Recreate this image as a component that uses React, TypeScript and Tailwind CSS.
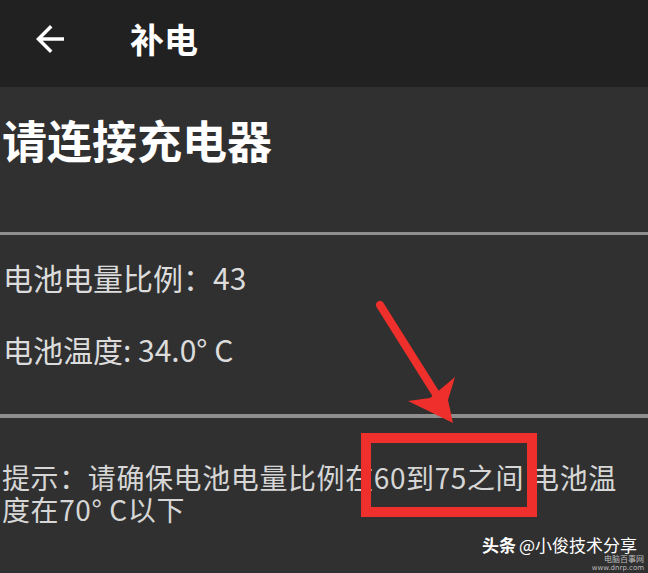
import React from "react";

const font = { fontFamily: '"Noto Sans CJK SC", "Noto Sans", sans-serif' };

export default function App() {
  return (
    <div className="relative w-[648px] h-[573px] overflow-hidden bg-[#303030]" style={font}>
      {/* header */}
      <div className="h-[87px] bg-[#212121] flex items-center">
        <svg width="42" height="42" viewBox="0 0 24 24" className="ml-[29px] mt-[-10px]" fill="#ffffff">
          <path d="M20 11H7.83l5.59-5.59L12 4l-8 8 8 8 1.41-1.41L7.83 13H20v-2z" />
        </svg>
        <div className="ml-[59px] mt-[-10px] text-[34px] font-bold text-white leading-none">补电</div>
      </div>

      {/* title */}
      <div className="pt-[24px] pl-[2px] text-[45px] font-bold text-white leading-[58px]">请连接充电器</div>

      <div className="mt-[63px] h-[3px] bg-[#8e8e8e]" />

      <div className="mt-[6px] pl-[3px] text-[30px] text-[#dcdcdc] leading-[72px]">电池电量比例：43</div>
      <div className="pl-[3px] text-[30px] text-[#dcdcdc] leading-[72px]">电池温度: 34.0° C</div>

      <div className="mt-[29px] h-[4px] bg-[#8e8e8e]" />

      <div className="mt-[43px] pl-[2px] pr-[20px] text-[28px] tracking-[0.6px] text-[#d6d6d6] leading-[32px]">
        提示：请确保电池电量比例在60到75之间 电池温度在70° C以下
      </div>

      {/* annotations */}
      <div className="absolute left-[361px] top-[433px] w-[176px] h-[84px] border-[10px] border-[#ee2f2b]" />
      <svg className="absolute left-0 top-0" width="648" height="573" viewBox="0 0 648 573">
        <line x1="380" y1="305" x2="446" y2="410" stroke="#ee2f2b" strokeWidth="8" strokeLinecap="round" />
        <polygon points="453,423 408,401 430,398 455,377 448,400" fill="#ee2f2b" />
      </svg>

      {/* watermark */}
      <div className="absolute left-[482px] top-[536px] flex items-center text-white text-[17px] leading-none">
        <span className="font-bold">头条</span>
        <span className="ml-[3px]">@小俊技术分享</span>
      </div>
      <div className="absolute right-[4px] top-[555px] flex flex-col items-end text-[#bdbdbd] leading-none">
        <span className="text-[8px]">电脑百事网</span>
        <span className="text-[7px] mt-[2px]" style={{ fontFamily: '"DejaVu Sans", sans-serif' }}>www.dnrp.com</span>
      </div>
    </div>
  );
}
